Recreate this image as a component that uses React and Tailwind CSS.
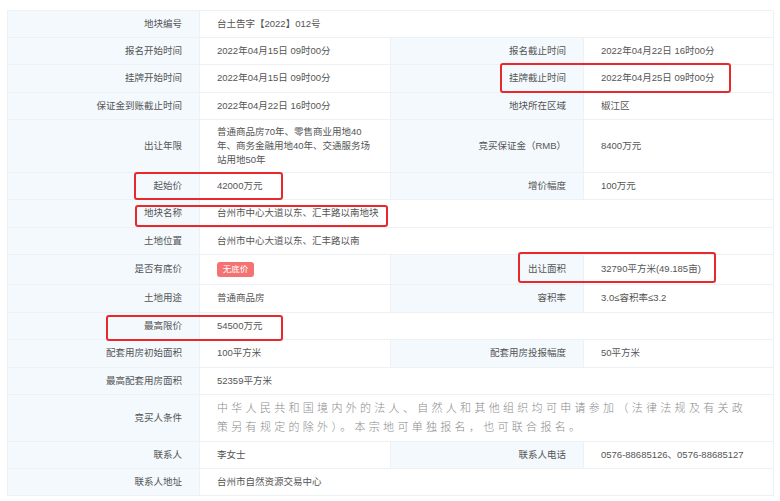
import React from 'react'

const FONT = '"Liberation Sans", "Noto Sans CJK SC", sans-serif'

// each row: height + one or two [label, value] pairs; a lone pair spans the rest of the row
const ROWS = [
  { h: 27, cells: [['地块编号', '台土告字【2022】012号']] },
  { h: 27, cells: [['报名开始时间', '2022年04月15日 09时00分'], ['报名截止时间', '2022年04月22日 16时00分']] },
  { h: 28, cells: [['挂牌开始时间', '2022年04月15日 09时00分'], ['挂牌截止时间', '2022年04月25日 09时00分']] },
  { h: 27, cells: [['保证金到账截止时间', '2022年04月22日 16时00分'], ['地块所在区域', '椒江区']] },
  { h: 53, cells: [['出让年限', 'term'], ['竞买保证金（RMB）', '8400万元']] },
  { h: 27, cells: [['起始价', '42000万元'], ['增价幅度', '100万元']] },
  { h: 28, cells: [['地块名称', '台州市中心大道以东、汇丰路以南地块']] },
  { h: 27, cells: [['土地位置', '台州市中心大道以东、汇丰路以南']] },
  { h: 30, cells: [['是否有底价', 'badge'], ['出让面积', '32790平方米(49.185亩)']] },
  { h: 28, cells: [['土地用途', '普通商品房'], ['容积率', '3.0≤容积率≤3.2']] },
  { h: 27, cells: [['最高限价', '54500万元']] },
  { h: 28, cells: [['配套用房初始面积', '100平方米'], ['配套用房投报幅度', '50平方米']] },
  { h: 27, cells: [['最高配套用房面积', '52359平方米']] },
  { h: 47, cells: [['竞买人条件', 'cond']] },
  { h: 27, cells: [['联系人', '李女士'], ['联系人电话', '0576-88685126、0576-88685127']] },
  { h: 27, cells: [['联系人地址', '台州市自然资源交易中心']] },
]

const MARKS = [
  'left-[500px] top-[63px] w-[231px] h-[30px]',
  'left-[134px] top-[172px] w-[149px] h-[28px]',
  'left-[135px] top-[205px] w-[253px] h-[22px]',
  'left-[518px] top-[252px] w-[198px] h-[31px]',
  'left-[106px] top-[315px] w-[177px] h-[26px]',
]

function Value({ v }) {
  if (v === 'term') {
    return (
      <div className="leading-[14px]">
        普通商品房70年、零售商业用地40<br />年、商务金融用地40年、交通服务场<br />站用地50年
      </div>
    )
  }
  if (v === 'badge') {
    return (
      <span className="inline-flex items-center justify-center w-[37px] h-[15px] rounded-[3px] bg-[#f57272] text-white text-[8.5px]">
        无底价
      </span>
    )
  }
  if (v === 'cond') {
    return (
      <div className="text-[11px] leading-[19px] tracking-[3.3px] text-[#8a8a8a] font-light">
        中华人民共和国境内外的法人、自然人和其他组织均可申请参加（法律法规及有关政<br />
        策另有规定的除外）。本宗地可单独报名，也可联合报名。
      </div>
    )
  }
  return <span>{v}</span>
}

export default function App() {
  return (
    <div className="relative w-[780px] h-[501px] overflow-hidden bg-white" style={{ fontFamily: FONT }}>
      <div className="ml-[7px] mt-[10px] w-[766px] grid grid-cols-[192px_191px_193px_190px] border-t border-l border-[#edf1f4] text-[9.5px] text-[#555]">
        {ROWS.map((row, i) =>
          row.cells.map(([label, value], j) => {
            const span = row.cells.length === 1
            return (
              <React.Fragment key={`${i}-${j}`}>
                <div
                  className="flex items-center justify-end pr-[17px] bg-[#f3f9fd] border-r border-b border-[#edf1f4] whitespace-nowrap"
                  style={{ height: row.h }}
                >
                  {label}
                </div>
                <div
                  className={`flex items-center pl-[17px] bg-white border-r border-b border-[#edf1f4] whitespace-nowrap ${span ? 'col-span-3' : ''}`}
                  style={{ height: row.h }}
                >
                  <Value v={value} />
                </div>
              </React.Fragment>
            )
          })
        )}
      </div>

      {/* red highlight boxes */}
      {MARKS.map((m) => (
        <div key={m} className={`absolute ${m} border-2 border-[#e8282b] rounded-[3px] pointer-events-none`} />
      ))}
    </div>
  )
}
